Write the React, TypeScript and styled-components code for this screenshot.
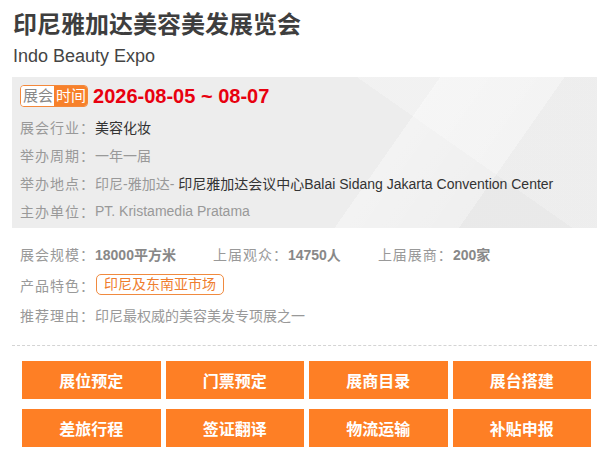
import React from "react";
import styled, { createGlobalStyle } from "styled-components";

const GlobalStyle = createGlobalStyle`
  html, body { margin: 0; padding: 0; background: #fff; }
  body { font-family: "Liberation Sans", "Noto Sans CJK SC", sans-serif; }
`;

const Page = styled.div`
  width: 611px;
  padding: 10px 14px 0 12px;
  box-sizing: border-box;
`;

const Title = styled.h1`
  margin: 0 0 0 1px;
  font-size: 24px;
  line-height: 30px;
  font-weight: bold;
  color: #3e3e3e;
`;

const Subtitle = styled.div`
  margin: 4px 0 0 1px;
  font-size: 18px;
  line-height: 24px;
  color: #444;
`;

const InfoBox = styled.div`
  margin-top: 9px;
  padding: 8px 8px 3px 8px;
  background:
    linear-gradient(125deg, rgba(255,255,255,0) 62%, rgba(255,255,255,0.35) 62%, rgba(255,255,255,0.15) 80%, rgba(0,0,0,0.015) 80%),
    linear-gradient(35deg, rgba(255,255,255,0) 70%, rgba(255,255,255,0.25) 70%),
    #ededed;
`;

const DateRow = styled.div`
  display: flex;
  align-items: center;
  height: 22px;
  margin-bottom: 6px;
`;

const Badge = styled.div`
  display: flex;
  border: 1px solid #f4883a;
  border-radius: 4px;
  overflow: hidden;
  height: 20px;
`;

const BadgeHalf = styled.span<{ $active?: boolean }>`
  display: flex;
  align-items: center;
  padding: 0 1px 0 2px;
  font-size: 15px;
  line-height: 20px;
  background: ${(p) => (p.$active ? "#f7812b" : "#fff")};
  color: ${(p) => (p.$active ? "#fff" : "#888")};
`;

const DateText = styled.span`
  margin-left: 5px;
  font-family: "Liberation Sans", Arial, sans-serif;
  font-weight: bold;
  font-size: 20px;
  line-height: 22px;
  color: #e8000f;
`;

const Row = styled.div<{ $h?: number }>`
  display: flex;
  align-items: center;
  height: ${(p) => p.$h ?? 28}px;
  font-size: 14px;
  white-space: nowrap;
`;

const Label = styled.span`
  width: 75px;
  flex: none;
  color: #999;
  letter-spacing: 1px;
`;

const Value = styled.span<{ $dark?: boolean; $bold?: boolean }>`
  color: ${(p) => (p.$dark ? "#333" : p.$bold ? "#888" : "#999")};
  font-weight: ${(p) => (p.$bold ? "bold" : "normal")};
`;

const Stats = styled.div`
  padding: 11px 0 0 8px;
`;

const StatItem = styled.span`
  display: flex;
  align-items: center;
  margin-right: 37px;
`;

const Tag = styled.span`
  margin-left: 1px;
  border: 1px solid #f08a3f;
  border-radius: 5px;
  padding: 0 7px;
  height: 19px;
  line-height: 19px;
  color: #ef7d2e;
  font-size: 14px;
`;

const Divider = styled.div`
  margin-top: 15px;
  border-top: 1px dashed #d4d4d4;
`;

const ButtonGrid = styled.div`
  display: grid;
  grid-template-columns: repeat(4, 1fr);
  column-gap: 5px;
  row-gap: 10px;
  margin: 15px 6px 0 10px;
`;

const ActionButton = styled.button`
  height: 38px;
  border: none;
  background: #fe7f25;
  color: #fff;
  font-family: "Liberation Sans", "Noto Sans CJK SC", sans-serif;
  font-size: 16px;
  font-weight: bold;
  cursor: pointer;
  padding: 0;
`;

const buttons = ["展位预定", "门票预定", "展商目录", "展台搭建", "差旅行程", "签证翻译", "物流运输", "补贴申报"];

export default function App() {
  return (
    <>
      <GlobalStyle />
      <Page>
        <Title>印尼雅加达美容美发展览会</Title>
        <Subtitle>Indo Beauty Expo</Subtitle>
        <InfoBox>
          <DateRow>
            <Badge>
              <BadgeHalf>展会</BadgeHalf>
              <BadgeHalf $active>时间</BadgeHalf>
            </Badge>
            <DateText>2026-08-05 ~ 08-07</DateText>
          </DateRow>
          <Row>
            <Label>展会行业：</Label>
            <Value $dark>美容化妆</Value>
          </Row>
          <Row>
            <Label>举办周期：</Label>
            <Value>一年一届</Value>
          </Row>
          <Row>
            <Label>举办地点：</Label>
            <Value>印尼-雅加达-</Value>
            <Value $dark>&nbsp;印尼雅加达会议中心Balai Sidang Jakarta Convention Center</Value>
          </Row>
          <Row>
            <Label>主办单位：</Label>
            <Value>PT. Kristamedia Pratama</Value>
          </Row>
        </InfoBox>
        <Stats>
          <Row $h={30}>
            <StatItem>
              <Label>展会规模：</Label>
              <Value $bold>18000平方米</Value>
            </StatItem>
            <StatItem>
              <Label>上届观众：</Label>
              <Value $bold>14750人</Value>
            </StatItem>
            <StatItem>
              <Label>上届展商：</Label>
              <Value $bold>200家</Value>
            </StatItem>
          </Row>
          <Row $h={31}>
            <Label>产品特色：</Label>
            <Tag>印尼及东南亚市场</Tag>
          </Row>
          <Row $h={30}>
            <Label>推荐理由：</Label>
            <Value>印尼最权威的美容美发专项展之一</Value>
          </Row>
        </Stats>
        <Divider />
        <ButtonGrid>
          {buttons.map((b) => (
            <ActionButton key={b}>{b}</ActionButton>
          ))}
        </ButtonGrid>
      </Page>
    </>
  );
}
